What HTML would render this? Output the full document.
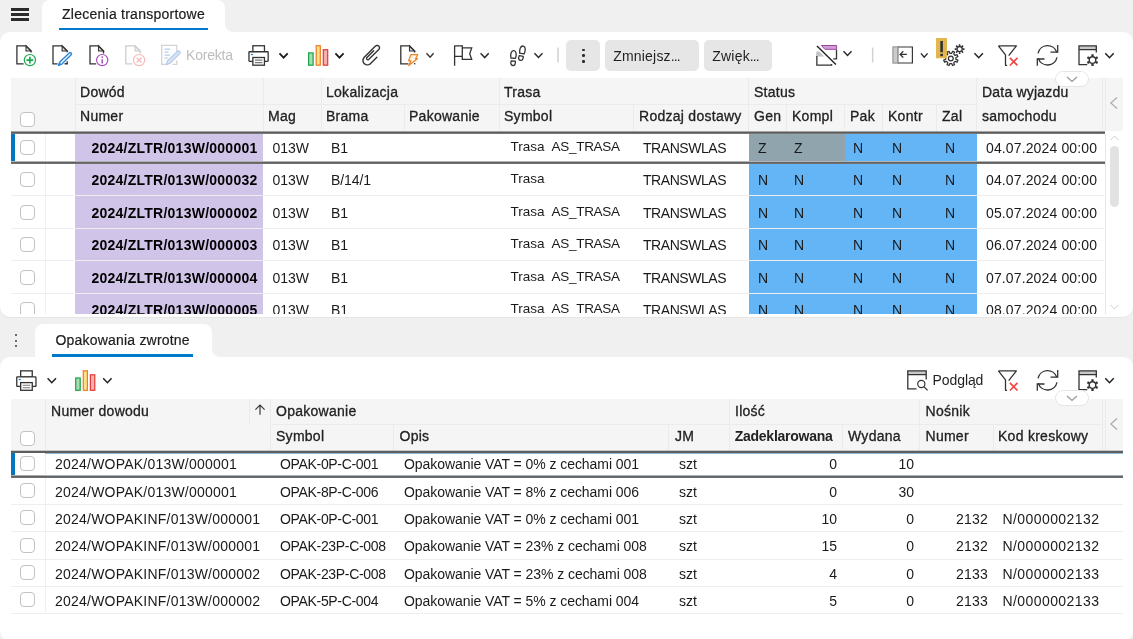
<!DOCTYPE html>
<html><head><meta charset="utf-8"><title>Zlecenia transportowe</title>
<style>
*{box-sizing:border-box;margin:0;padding:0}
html,body{width:1133px;height:639px;overflow:hidden;background:#f0f0f0;font-family:"Liberation Sans",sans-serif;font-size:14px;color:#212121}
.a{position:absolute}
.panel{position:absolute;left:0;width:1133px;background:#fff;border-radius:10px}
.tab{position:absolute;background:#fff;border-radius:8px 8px 0 0}
.lbl{position:absolute;white-space:pre;color:#1c1c1c;line-height:16px;-webkit-text-stroke:0.2px #1c1c1c}
.ul{position:absolute;height:2.8px;background:#007acc}
.hd{position:absolute;background:#f5f5f5}
.hc{position:absolute;white-space:pre;font-size:14px;color:#222;line-height:16px;-webkit-text-stroke:0.3px #222;letter-spacing:0.27px}
.hb{position:absolute;white-space:pre;font-size:14px;color:#222;line-height:16px;font-weight:700}
.vs{position:absolute;width:1px;background:#ebebeb}
.hs{position:absolute;height:1px;background:#ebebeb}
.c{position:absolute;white-space:pre;line-height:16px;color:#1a1a1a}
.b{font-weight:700;color:#000}
.cb{position:absolute;width:15px;height:15px;border:1px solid #c2c2c2;border-radius:4px;background:#fff}
.bg{position:absolute}
svg{position:absolute;overflow:visible}
</style></head><body>
<div id="root" style="position:absolute;left:0;top:0;width:1133px;height:639px;overflow:hidden;transform:translateZ(0);will-change:transform">
<div class="a" style="left:11px;top:8px;width:18px;height:2.6px;background:#2b2b2b"></div>
<div class="a" style="left:11px;top:13px;width:18px;height:2.6px;background:#2b2b2b"></div>
<div class="a" style="left:11px;top:18px;width:18px;height:2.6px;background:#2b2b2b"></div>
<div class="tab" style="left:42px;top:0;width:183.2px;height:34px"></div>
<div class="a" style="left:225.2px;top:23.7px;width:8px;height:8px;background:radial-gradient(circle at 100% 0,rgba(255,255,255,0) 7.6px,#fff 8.2px)"></div>
<div class="lbl" style="left:62px;top:6px;letter-spacing:0.25px">Zlecenia transportowe</div>
<div class="ul" style="left:59px;top:27.7px;width:149.2px"></div>
<div class="panel" style="top:31.7px;height:285.3px;box-shadow:0 1px 0 #e6e6e6"></div>
<div class="tab" style="left:35px;top:324px;width:176.5px;height:35px"></div>
<div class="a" style="left:211.5px;top:349px;width:8px;height:8px;background:radial-gradient(circle at 100% 0,rgba(255,255,255,0) 7.6px,#fff 8.2px)"></div>
<div class="lbl" style="left:55.5px;top:332px;letter-spacing:0.2px">Opakowania zwrotne</div>
<div class="ul" style="left:52px;top:354.2px;width:140.8px"></div>
<div class="a" style="left:15.1px;top:334.3px;width:2px;height:2px;border-radius:1px;background:#3c3c3c"></div>
<div class="a" style="left:15.1px;top:339.55px;width:2px;height:2px;border-radius:1px;background:#3c3c3c"></div>
<div class="a" style="left:15.1px;top:344.7px;width:2px;height:2px;border-radius:1px;background:#3c3c3c"></div>
<div class="panel" style="top:357px;height:284px"></div>
<svg style="left:0;top:0" width="1133" height="80" viewBox="0 0 1133 80"><path d="M26.0 45.9 V51.0 H31.1 Z" fill="#dcdcdc" stroke="#333" stroke-width="1.1" stroke-linejoin="miter"/><path d="M23.6 63.8 H16.9 V45.9 H26.0 L31.1 51.0 V52.6" fill="none" stroke="#333" stroke-width="1.3"/><circle cx="29.9" cy="60.1" r="5.6" fill="#fff" stroke="#17a84b" stroke-width="1.2"/><path d="M26.5 60.1 H33.3 M29.9 56.7 V63.5" stroke="#17a84b" stroke-width="1.7"/><path d="M62.1 45.9 V51.0 H67.2 Z" fill="#dcdcdc" stroke="#333" stroke-width="1.1" stroke-linejoin="miter"/><path d="M57.6 63.8 H53.0 V45.9 H62.1 L67.2 51.0 V52.2" fill="none" stroke="#333" stroke-width="1.3"/><path d="M64.6 63.75 H67.25 V61.2" fill="none" stroke="#333" stroke-width="1.3"/><path d="M58.5 65.4 L59.8 62 L69.3 52.9 A1.35 1.35 0 0 1 71.2 54.8 L61.9 64.1 Z" fill="#fff" stroke="#2b85d8" stroke-width="1.45" stroke-linejoin="round"/><path d="M58.2 65.7 L59.5 62.3 L61.6 64.4 Z" fill="#2b85d8"/><path d="M98.5 45.9 V51.0 H103.5 Z" fill="#dcdcdc" stroke="#333" stroke-width="1.1" stroke-linejoin="miter"/><path d="M96.2 63.8 H90.0 V45.9 H98.5 L103.5 51.0 V53.4" fill="none" stroke="#333" stroke-width="1.3"/><circle cx="102.2" cy="60.1" r="5.6" fill="#fff" stroke="#a64dbd" stroke-width="1.2"/><path d="M102.2 59.2 V63.4" stroke="#a64dbd" stroke-width="1.5"/><circle cx="102.2" cy="57.1" r="0.9" fill="#a64dbd"/><path d="M135.0 45.9 V51.0 H140.1 Z" fill="#f0f0f0" stroke="#cdcdcd" stroke-width="1.1" stroke-linejoin="miter"/><path d="M132.4 63.8 H125.8 V45.9 H135.0 L140.1 51.0 V53.4" fill="none" stroke="#cdcdcd" stroke-width="1.3"/><circle cx="139.1" cy="60.1" r="5.6" fill="#fff" stroke="#f7b9b9" stroke-width="1.2"/><path d="M136.7 57.7 L141.5 62.5 M141.5 57.7 L136.7 62.5" stroke="#f7b9b9" stroke-width="1.3"/><path d="M166.4 64.3 H161.7 V45.4 H176.8 V53.5 M176.8 60.5 V64.3 H172.5" fill="none" stroke="#d4d4d4" stroke-width="1.3"/><path d="M164.6 49.2 H170 M164.6 52.2 H168.6 M164.6 55.2 H170 M164.6 58.2 H167.6" stroke="#b3cdee" stroke-width="1.2"/><path d="M166.3 64.6 L167.6 60.6 L177.4 51.4 A1.5 1.5 0 0 1 179.7 53.7 L170.2 63.2 Z" fill="#d6e3f4" stroke="#b3cbea" stroke-width="1.2" stroke-linejoin="round"/><rect x="252.85" y="45.75" width="11.6" height="6" fill="#fff" stroke="#333" stroke-width="1.3"/><rect x="248.95" y="51.75" width="19.2" height="9.6" rx="0.5" fill="#fff" stroke="#333" stroke-width="1.3"/><rect x="252.85" y="57.50" width="11.6" height="7.7" fill="#fff" stroke="#333" stroke-width="1.3"/><path d="M254.9 60.1 H262.4 M254.9 62.6 H262.4" stroke="#777" stroke-width="1.1"/><ellipse cx="252.0" cy="54.5" rx="1.3" ry="0.75" fill="#1e88e5"/><path d="M279.5 53.4 L283.6 57.7 L287.7 53.4" fill="none" stroke="#1a1a1a" stroke-width="1.75"/><rect x="308.6" y="52.9" width="4.5" height="12.3" fill="#a9dbb0" stroke="#16a34a" stroke-width="1.2"/><rect x="316.2" y="45.7" width="4.1" height="19.5" fill="#ffe08a" stroke="#ef7d22" stroke-width="1.2"/><rect x="323.3" y="49.7" width="4.4" height="15.5" fill="#f6b0b0" stroke="#e53935" stroke-width="1.2"/><path d="M335.4 53.4 L339.5 57.7 L343.6 53.4" fill="none" stroke="#1a1a1a" stroke-width="1.75"/><path d="M373.64 50.77 L366.99 57.42 L366.99 57.42 L366.80 57.65 L366.67 57.93 L366.60 58.22 L366.60 58.52 L366.67 58.82 L366.80 59.09 L366.99 59.33 L367.23 59.52 L367.50 59.65 L367.79 59.71 L368.10 59.71 L368.39 59.65 L368.66 59.52 L368.90 59.33 L378.80 49.43 L378.80 49.43 L379.13 49.02 L379.36 48.54 L379.47 48.03 L379.47 47.50 L379.36 46.99 L379.13 46.51 L378.80 46.10 L378.39 45.78 L377.91 45.55 L377.40 45.43 L376.87 45.43 L376.36 45.55 L375.89 45.78 L375.48 46.10 L364.27 57.31 L364.27 57.31 L363.65 58.09 L363.21 58.99 L362.99 59.96 L362.99 60.96 L363.21 61.93 L363.65 62.83 L364.27 63.60 L365.05 64.23 L365.94 64.66 L366.92 64.88 L367.91 64.88 L368.88 64.66 L369.78 64.23 L370.56 63.60 L376.89 57.28" fill="none" stroke="#333" stroke-width="1.4" stroke-linecap="round" stroke-linejoin="round"/><path d="M409.5 45.9 V51.0 H414.6 Z" fill="#dcdcdc" stroke="#333" stroke-width="1.1" stroke-linejoin="miter"/><path d="M408.4 63.8 H400.8 V45.9 H409.5 L414.6 51.0 V52.4" fill="none" stroke="#333" stroke-width="1.3"/><path d="M414.3 63.75 H414.65 V63" fill="none" stroke="#333" stroke-width="1.3"/><path d="M410.9 54.7 H417.7 L415.5 58.7 H417.4 L408.7 65.5 L411 60.8 H408.6 Z" fill="#fff6ec" stroke="#ee8426" stroke-width="1.25" stroke-linejoin="round"/><path d="M426.5 53.3 L430.1 57.3 L433.6 53.3" fill="none" stroke="#333" stroke-width="1.35"/><path d="M454.6 45.4 V65.8 M454.6 45.9 H462.3 V56.4 H454.6 M462.3 47.9 H471.7 L469.7 53.7 L471.7 59.4 H462.3 V56.4" fill="none" stroke="#333" stroke-width="1.3"/><path d="M480.6 53.3 L484.7 57.6 L488.7 53.3" fill="none" stroke="#2a2a2a" stroke-width="1.45"/><path d="M-2.3 3.8 C-3.3 0.2 -2.6 -3.8 0 -3.8 C2.6 -3.8 3.3 0.2 2.3 3.8 Z" transform="translate(513.5 54.4) rotate(5)" fill="none" stroke="#333" stroke-width="1.3" stroke-linejoin="round"/><path d="M-2.1 -2.2 H2.1 C2.7 1 1.7 2.3 0 2.3 C-1.7 2.3 -2.7 1 -2.1 -2.2 Z" transform="translate(513.05 63.2) rotate(5)" fill="none" stroke="#333" stroke-width="1.3" stroke-linejoin="round"/><path d="M-2.3 3.8 C-3.3 0.2 -2.6 -3.8 0 -3.8 C2.6 -3.8 3.3 0.2 2.3 3.8 Z" transform="translate(522.55 49.8) rotate(10)" fill="none" stroke="#333" stroke-width="1.3" stroke-linejoin="round"/><path d="M-2.1 -2.2 H2.1 C2.7 1 1.7 2.3 0 2.3 C-1.7 2.3 -2.7 1 -2.1 -2.2 Z" transform="translate(520.85 58.15) rotate(10)" fill="none" stroke="#333" stroke-width="1.3" stroke-linejoin="round"/><path d="M534.5 53.3 L538.5 57.5 L542.5 53.3" fill="none" stroke="#2a2a2a" stroke-width="1.45"/><rect x="557.3" y="47.5" width="1.5" height="15" fill="#d2d2d2"/><path d="M821.3 45.5 H836.6 V49.3 H824.9 Z" fill="#cda0d3" stroke="#a043a6" stroke-width="1"/><path d="M816.2 51.4 H819.4 L824.2 56.5 H816.2 Z" fill="#c4c4c4"/><path d="M836.5 49.8 V58.9 H833.2 M816.85 56 V65.2 H831.6 V63.9" fill="none" stroke="#333" stroke-width="1.3"/><path d="M817 46 L835.9 64.6" stroke="#222" stroke-width="1.4"/><path d="M843.5 51.3 L847.5 55.5 L851.5 51.3" fill="none" stroke="#2a2a2a" stroke-width="1.45"/><rect x="871.9" y="47.5" width="1.5" height="15" fill="#d2d2d2"/><rect x="892.9" y="46.9" width="5" height="16.2" fill="#cbcbcb" stroke="#8c8c8c" stroke-width="1"/><path d="M898 47 H912.4 V63 H898" fill="none" stroke="#3a3634" stroke-width="1.2"/><path d="M898 46.4 V63.6" stroke="#8c8c8c" stroke-width="0.9"/><path d="M906.9 54.4 H900.2 M903.3 51.3 L900.1 54.4 L903.3 57.5" fill="none" stroke="#333" stroke-width="1.25"/><path d="M920.9 53.4 L924.2 57.3 L927.6 53.4" fill="none" stroke="#2a2a2a" stroke-width="1.4"/><path d="M955.92 59.33 L957.88 60.17 L957.06 62.16 L955.08 61.36 L953.76 62.68 L954.56 64.66 L952.57 65.48 L951.73 63.52 L949.87 63.52 L949.03 65.48 L947.04 64.66 L947.84 62.68 L946.52 61.36 L944.54 62.16 L943.72 60.17 L945.68 59.33 L945.68 57.47 L943.72 56.63 L944.54 54.64 L946.52 55.44 L947.84 54.12 L947.04 52.14 L949.03 51.32 L949.87 53.28 L951.73 53.28 L952.57 51.32 L954.56 52.14 L953.76 54.12 L955.08 55.44 L957.06 54.64 L957.88 56.63 L955.92 57.47 Z" fill="#fff" stroke="#333" stroke-width="1.25" stroke-linejoin="round"/><circle cx="950.8" cy="58.4" r="2.4" fill="#fff" stroke="#333" stroke-width="1.25"/><circle cx="959.6" cy="49.1" r="2.6" fill="#fff" stroke="#333" stroke-width="1.3"/><path d="M962.70 49.10 L964.50 49.10 M961.79 51.29 L963.06 52.56 M959.60 52.20 L959.60 54.00 M957.41 51.29 L956.14 52.56 M956.50 49.10 L954.70 49.10 M957.41 46.91 L956.14 45.64 M959.60 46.00 L959.60 44.20 M961.79 46.91 L963.06 45.64 " stroke="#333" stroke-width="1.6" fill="none"/><rect x="936" y="38" width="11" height="20.3" fill="#e3b650"/><rect x="940.3" y="41" width="2.6" height="11.2" fill="#333"/><rect x="940.3" y="53.8" width="2.6" height="2.4" fill="#333"/><path d="M974.5 53.3 L978.7 57.7 L982.9 53.3" fill="none" stroke="#222" stroke-width="1.5"/><path d="M998.4 45.9 H1016.4 L1008.7 55.7 M998.4 45.9 L1005.5 54.9 V65.3 H1007.1" fill="none" stroke="#333" stroke-width="1.3" stroke-linejoin="round"/><path d="M1009.9 57.9 L1017.5 65.5 M1017.5 57.9 L1009.9 65.5" stroke="#f04545" stroke-width="1.7"/><path d="M1038.01 53.28 A9.7 9.7 0 0 1 1056.73 52.30" fill="none" stroke="#333" stroke-width="1.3"/><path d="M1057.7 44.9 V52.2 H1050.5" fill="none" stroke="#333" stroke-width="1.3"/><path d="M1056.99 57.32 A9.7 9.7 0 0 1 1038.27 58.30" fill="none" stroke="#333" stroke-width="1.3"/><path d="M1037.3 65.8 V59.0 H1044.5" fill="none" stroke="#333" stroke-width="1.3"/><rect x="1079.0" y="45.9" width="17.3" height="3.4" fill="#c9c9c9"/><path d="M1087.4 64.7 H1079.0 V45.9 H1096.3 V52.5 M1079.0 49.6 H1096.3" fill="none" stroke="#333" stroke-width="1.3"/><circle cx="1092.5" cy="60.1" r="6.6" fill="#fff"/><circle cx="1092.5" cy="60.1" r="3.3" fill="#fff" stroke="#333" stroke-width="1.4"/><path d="M1095.88 62.05 L1097.61 63.05 M1092.50 64.00 L1092.50 66.00 M1089.12 62.05 L1087.39 63.05 M1089.12 58.15 L1087.39 57.15 M1092.50 56.20 L1092.50 54.20 M1095.88 58.15 L1097.61 57.15 " stroke="#333" stroke-width="2.3" fill="none"/><path d="M1105.3 53.3 L1109.5 57.7 L1113.7 53.3" fill="none" stroke="#222" stroke-width="1.5"/></svg>
<div class="a" style="left:186px;top:47.4px;line-height:16px;color:#bdbdbd;letter-spacing:-0.2px;white-space:pre">Korekta</div>
<div class="a" style="left:566px;top:40px;width:34px;height:31px;border-radius:5px;background:#e6e6e6"></div>
<div class="a" style="left:582.3px;top:48.6px;width:2.5px;height:2.5px;border-radius:1.3px;background:#2a2a2a"></div>
<div class="a" style="left:582.3px;top:54.4px;width:2.5px;height:2.5px;border-radius:1.3px;background:#2a2a2a"></div>
<div class="a" style="left:582.3px;top:60.2px;width:2.5px;height:2.5px;border-radius:1.3px;background:#2a2a2a"></div>
<div class="a" style="left:605px;top:40px;width:94px;height:31px;border-radius:5px;background:#e6e6e6"></div>
<div class="a" style="left:613.2px;top:47.5px;line-height:16px;color:#1f1f1f;white-space:pre;letter-spacing:0.2px">Zmniejsz<span style="letter-spacing:-0.9px">...</span></div>
<div class="a" style="left:704px;top:40px;width:68px;height:31px;border-radius:5px;background:#e6e6e6"></div>
<div class="a" style="left:712.3px;top:47.5px;line-height:16px;color:#1f1f1f;white-space:pre;letter-spacing:0.2px">Zwięk<span style="letter-spacing:-0.9px">...</span></div>

<svg style="left:0;top:325px" width="1133" height="80" viewBox="0 0 1133 80"><rect x="20.65" y="45.85" width="11.6" height="6" fill="#fff" stroke="#333" stroke-width="1.3"/><rect x="16.75" y="51.85" width="19.2" height="9.6" rx="0.5" fill="#fff" stroke="#333" stroke-width="1.3"/><rect x="20.65" y="57.60" width="11.6" height="7.7" fill="#fff" stroke="#333" stroke-width="1.3"/><path d="M22.7 60.2 H30.2 M22.7 62.7 H30.2" stroke="#777" stroke-width="1.1"/><ellipse cx="19.8" cy="54.6" rx="1.3" ry="0.75" fill="#1e88e5"/><path d="M47.6 53.3 L51.8 57.7 L56.0 53.3" fill="none" stroke="#222" stroke-width="1.5"/><rect x="75.7" y="53.0" width="4.5" height="12.3" fill="#a9dbb0" stroke="#16a34a" stroke-width="1.2"/><rect x="83.3" y="45.8" width="4.1" height="19.5" fill="#ffe08a" stroke="#ef7d22" stroke-width="1.2"/><rect x="90.4" y="49.8" width="4.4" height="15.5" fill="#f6b0b0" stroke="#e53935" stroke-width="1.2"/><path d="M103.2 53.3 L107.4 57.7 L111.6 53.3" fill="none" stroke="#222" stroke-width="1.5"/><rect x="907.8" y="45.9" width="18.4" height="3.4" fill="#c9c9c9"/><path d="M916.5 63.8 H907.8 V45.9 H926.2 V54.6 M907.8 49.6 H926.2" fill="none" stroke="#333" stroke-width="1.3"/><circle cx="921.3" cy="59" r="3.6" fill="#fff" stroke="#333" stroke-width="1.2"/><path d="M923.9 61.6 L927.6 65.4" stroke="#333" stroke-width="1.3"/><path d="M998.4 45.9 H1016.4 L1008.7 55.7 M998.4 45.9 L1005.5 54.9 V65.3 H1007.1" fill="none" stroke="#333" stroke-width="1.3" stroke-linejoin="round"/><path d="M1009.9 57.9 L1017.5 65.5 M1017.5 57.9 L1009.9 65.5" stroke="#f04545" stroke-width="1.7"/><path d="M1038.01 53.28 A9.7 9.7 0 0 1 1056.73 52.30" fill="none" stroke="#333" stroke-width="1.3"/><path d="M1057.7 44.9 V52.2 H1050.5" fill="none" stroke="#333" stroke-width="1.3"/><path d="M1056.99 57.32 A9.7 9.7 0 0 1 1038.27 58.30" fill="none" stroke="#333" stroke-width="1.3"/><path d="M1037.3 65.8 V59.0 H1044.5" fill="none" stroke="#333" stroke-width="1.3"/><rect x="1079.0" y="45.9" width="17.3" height="3.4" fill="#c9c9c9"/><path d="M1087.4 64.7 H1079.0 V45.9 H1096.3 V52.5 M1079.0 49.6 H1096.3" fill="none" stroke="#333" stroke-width="1.3"/><circle cx="1092.5" cy="60.1" r="6.6" fill="#fff"/><circle cx="1092.5" cy="60.1" r="3.3" fill="#fff" stroke="#333" stroke-width="1.4"/><path d="M1095.88 62.05 L1097.61 63.05 M1092.50 64.00 L1092.50 66.00 M1089.12 62.05 L1087.39 63.05 M1089.12 58.15 L1087.39 57.15 M1092.50 56.20 L1092.50 54.20 M1095.88 58.15 L1097.61 57.15 " stroke="#333" stroke-width="2.3" fill="none"/><path d="M1105.3 53.3 L1109.5 57.7 L1113.7 53.3" fill="none" stroke="#222" stroke-width="1.5"/></svg>
<div class="a" style="left:932.5px;top:372px;line-height:16px;color:#1f1f1f;white-space:pre;letter-spacing:-0.08px">Podgląd</div>

<div class="a" id="g1" style="left:0;top:0;width:1133px;height:314px;overflow:hidden">
<div class="hd" style="left:11px;top:78px;width:1112px;height:53px"></div>
<div class="vs" style="left:75px;top:78px;height:53px"></div>
<div class="vs" style="left:263px;top:78px;height:53px"></div>
<div class="vs" style="left:321px;top:78px;height:53px"></div>
<div class="vs" style="left:499px;top:78px;height:53px"></div>
<div class="vs" style="left:748px;top:78px;height:53px"></div>
<div class="vs" style="left:976px;top:78px;height:53px"></div>
<div class="vs" style="left:1102px;top:78px;height:53px"></div>
<div class="vs" style="left:1105px;top:78px;height:53px"></div>
<div class="vs" style="left:404px;top:104px;height:27px"></div>
<div class="vs" style="left:633px;top:104px;height:27px"></div>
<div class="vs" style="left:786px;top:104px;height:27px"></div>
<div class="vs" style="left:844px;top:104px;height:27px"></div>
<div class="vs" style="left:882px;top:104px;height:27px"></div>
<div class="vs" style="left:936px;top:104px;height:27px"></div>
<div class="hs" style="left:75px;top:104px;width:901px"></div>
<div class="hc" style="left:80px;top:84px;">Dowód</div>
<div class="hc" style="left:326px;top:84px;">Lokalizacja</div>
<div class="hc" style="left:504px;top:84px;">Trasa</div>
<div class="hc" style="left:754px;top:84px;">Status</div>
<div class="hc" style="left:982px;top:84px;letter-spacing:0.2px">Data wyjazdu</div>
<div class="hc" style="left:80px;top:108px">Numer</div>
<div class="hc" style="left:268px;top:108px">Mag</div>
<div class="hc" style="left:326px;top:108px">Brama</div>
<div class="hc" style="left:409px;top:108px">Pakowanie</div>
<div class="hc" style="left:504px;top:108px">Symbol</div>
<div class="hc" style="left:639px;top:108px">Rodzaj dostawy</div>
<div class="hc" style="left:754px;top:108px">Gen</div>
<div class="hc" style="left:792px;top:108px">Kompl</div>
<div class="hc" style="left:850px;top:108px">Pak</div>
<div class="hc" style="left:888px;top:108px">Kontr</div>
<div class="hc" style="left:942px;top:108px">Zal</div>
<div class="hc" style="left:982px;top:108px">samochodu</div>
<div class="cb" style="left:20px;top:112px"></div>
<div class="bg" style="left:75px;top:131.0px;width:188px;height:32.5px;background:#d1c4e9"></div>
<div class="bg" style="left:749px;top:131.0px;width:96px;height:32.5px;background:#90a4ae"></div>
<div class="bg" style="left:845px;top:131.0px;width:132px;height:32.5px;background:#64b5f6"></div>
<div class="hs" style="left:11px;top:162px;width:1093px;background:#eeeeee"></div>
<div class="cb" style="left:20px;top:139.5px"></div>
<div class="c b" style="right:875.5px;top:140.2px;letter-spacing:0.25px">2024/ZLTR/013W/000001</div>
<div class="c" style="left:272.5px;top:140.2px">013W</div>
<div class="c" style="left:331px;top:140.2px;letter-spacing:-0.1px">B1</div>
<div class="c" style="left:510.5px;top:139.29999999999998px;font-size:13.5px;letter-spacing:0px">Trasa</div>
<div class="c" style="left:551.6px;top:139.29999999999998px;font-size:13.5px;letter-spacing:-0.3px">AS_TRASA</div>
<div class="c" style="left:643px;top:140.2px;letter-spacing:-0.45px">TRANSWLAS</div>
<div class="c" style="left:758px;top:140.2px">Z</div>
<div class="c" style="left:794px;top:140.2px">Z</div>
<div class="c" style="left:853px;top:140.2px">N</div>
<div class="c" style="left:892px;top:140.2px">N</div>
<div class="c" style="left:945px;top:140.2px">N</div>
<div class="c" style="left:986px;top:140.2px;letter-spacing:0.13px">04.07.2024 00:00</div>
<div class="bg" style="left:75px;top:163.5px;width:188px;height:32.5px;background:#d1c4e9"></div>
<div class="bg" style="left:749px;top:163.5px;width:228px;height:32.5px;background:#64b5f6"></div>
<div class="hs" style="left:11px;top:195px;width:1093px;background:#eeeeee"></div>
<div class="cb" style="left:20px;top:172.0px"></div>
<div class="c b" style="right:875.5px;top:172.2px;letter-spacing:0.25px">2024/ZLTR/013W/000032</div>
<div class="c" style="left:272.5px;top:172.2px">013W</div>
<div class="c" style="left:331px;top:172.2px;letter-spacing:-0.1px">B/14/1</div>
<div class="c" style="left:510.5px;top:171.29999999999998px;font-size:13.5px;letter-spacing:0px">Trasa</div>
<div class="c" style="left:643px;top:172.2px;letter-spacing:-0.45px">TRANSWLAS</div>
<div class="c" style="left:758px;top:172.2px">N</div>
<div class="c" style="left:794px;top:172.2px">N</div>
<div class="c" style="left:853px;top:172.2px">N</div>
<div class="c" style="left:892px;top:172.2px">N</div>
<div class="c" style="left:945px;top:172.2px">N</div>
<div class="c" style="left:986px;top:172.2px;letter-spacing:0.13px">04.07.2024 00:00</div>
<div class="bg" style="left:75px;top:196.0px;width:188px;height:32.5px;background:#d1c4e9"></div>
<div class="bg" style="left:749px;top:196.0px;width:228px;height:32.5px;background:#64b5f6"></div>
<div class="hs" style="left:11px;top:228px;width:1093px;background:#eeeeee"></div>
<div class="cb" style="left:20px;top:204.5px"></div>
<div class="c b" style="right:875.5px;top:205.2px;letter-spacing:0.25px">2024/ZLTR/013W/000002</div>
<div class="c" style="left:272.5px;top:205.2px">013W</div>
<div class="c" style="left:331px;top:205.2px;letter-spacing:-0.1px">B1</div>
<div class="c" style="left:510.5px;top:204.29999999999998px;font-size:13.5px;letter-spacing:0px">Trasa</div>
<div class="c" style="left:551.6px;top:204.29999999999998px;font-size:13.5px;letter-spacing:-0.3px">AS_TRASA</div>
<div class="c" style="left:643px;top:205.2px;letter-spacing:-0.45px">TRANSWLAS</div>
<div class="c" style="left:758px;top:205.2px">N</div>
<div class="c" style="left:794px;top:205.2px">N</div>
<div class="c" style="left:853px;top:205.2px">N</div>
<div class="c" style="left:892px;top:205.2px">N</div>
<div class="c" style="left:945px;top:205.2px">N</div>
<div class="c" style="left:986px;top:205.2px;letter-spacing:0.13px">05.07.2024 00:00</div>
<div class="bg" style="left:75px;top:228.5px;width:188px;height:32.5px;background:#d1c4e9"></div>
<div class="bg" style="left:749px;top:228.5px;width:228px;height:32.5px;background:#64b5f6"></div>
<div class="hs" style="left:11px;top:260px;width:1093px;background:#eeeeee"></div>
<div class="cb" style="left:20px;top:237.0px"></div>
<div class="c b" style="right:875.5px;top:237.2px;letter-spacing:0.25px">2024/ZLTR/013W/000003</div>
<div class="c" style="left:272.5px;top:237.2px">013W</div>
<div class="c" style="left:331px;top:237.2px;letter-spacing:-0.1px">B1</div>
<div class="c" style="left:510.5px;top:236.29999999999998px;font-size:13.5px;letter-spacing:0px">Trasa</div>
<div class="c" style="left:551.6px;top:236.29999999999998px;font-size:13.5px;letter-spacing:-0.3px">AS_TRASA</div>
<div class="c" style="left:643px;top:237.2px;letter-spacing:-0.45px">TRANSWLAS</div>
<div class="c" style="left:758px;top:237.2px">N</div>
<div class="c" style="left:794px;top:237.2px">N</div>
<div class="c" style="left:853px;top:237.2px">N</div>
<div class="c" style="left:892px;top:237.2px">N</div>
<div class="c" style="left:945px;top:237.2px">N</div>
<div class="c" style="left:986px;top:237.2px;letter-spacing:0.13px">06.07.2024 00:00</div>
<div class="bg" style="left:75px;top:261.0px;width:188px;height:32.5px;background:#d1c4e9"></div>
<div class="bg" style="left:749px;top:261.0px;width:228px;height:32.5px;background:#64b5f6"></div>
<div class="hs" style="left:11px;top:293px;width:1093px;background:#eeeeee"></div>
<div class="cb" style="left:20px;top:269.5px"></div>
<div class="c b" style="right:875.5px;top:270.2px;letter-spacing:0.25px">2024/ZLTR/013W/000004</div>
<div class="c" style="left:272.5px;top:270.2px">013W</div>
<div class="c" style="left:331px;top:270.2px;letter-spacing:-0.1px">B1</div>
<div class="c" style="left:510.5px;top:269.3px;font-size:13.5px;letter-spacing:0px">Trasa</div>
<div class="c" style="left:551.6px;top:269.3px;font-size:13.5px;letter-spacing:-0.3px">AS_TRASA</div>
<div class="c" style="left:643px;top:270.2px;letter-spacing:-0.45px">TRANSWLAS</div>
<div class="c" style="left:758px;top:270.2px">N</div>
<div class="c" style="left:794px;top:270.2px">N</div>
<div class="c" style="left:853px;top:270.2px">N</div>
<div class="c" style="left:892px;top:270.2px">N</div>
<div class="c" style="left:945px;top:270.2px">N</div>
<div class="c" style="left:986px;top:270.2px;letter-spacing:0.13px">07.07.2024 00:00</div>
<div class="bg" style="left:75px;top:293.5px;width:188px;height:32.5px;background:#d1c4e9"></div>
<div class="bg" style="left:749px;top:293.5px;width:228px;height:32.5px;background:#64b5f6"></div>
<div class="hs" style="left:11px;top:326px;width:1093px;background:#eeeeee"></div>
<div class="cb" style="left:20px;top:302.0px"></div>
<div class="c b" style="right:875.5px;top:302.2px;letter-spacing:0.25px">2024/ZLTR/013W/000005</div>
<div class="c" style="left:272.5px;top:302.2px">013W</div>
<div class="c" style="left:331px;top:302.2px;letter-spacing:-0.1px">B1</div>
<div class="c" style="left:510.5px;top:301.3px;font-size:13.5px;letter-spacing:0px">Trasa</div>
<div class="c" style="left:551.6px;top:301.3px;font-size:13.5px;letter-spacing:-0.3px">AS_TRASA</div>
<div class="c" style="left:643px;top:302.2px;letter-spacing:-0.45px">TRANSWLAS</div>
<div class="c" style="left:758px;top:302.2px">N</div>
<div class="c" style="left:794px;top:302.2px">N</div>
<div class="c" style="left:853px;top:302.2px">N</div>
<div class="c" style="left:892px;top:302.2px">N</div>
<div class="c" style="left:945px;top:302.2px">N</div>
<div class="c" style="left:986px;top:302.2px;letter-spacing:0.13px">08.07.2024 00:00</div>
<div class="vs" style="left:45px;top:131px;height:190px;background:#f0f0f0"></div>
<div class="vs" style="left:1105px;top:134px;height:190px;background:#e6e6e6"></div>
<div class="a" style="left:11px;top:131px;width:1093.5px;height:3px;background:linear-gradient(#a4a4a4 0 1px,#5c5c5c 1px 2px,#787878 2px 3px)"></div>
<div class="a" style="left:11px;top:161px;width:1093.5px;height:3px;background:linear-gradient(#b4b4b4 0 1px,#626262 1px 2px,#727272 2px 3px)"></div>
<div class="a" style="left:11px;top:134px;width:4px;height:27px;background:#0277bd"></div>
</div>
<svg style="left:1109px;top:96px" width="10" height="14" viewBox="0 0 10 14"><path d="M8 1.5 L1.8 7 L8 12.5" fill="none" stroke="#a8a8a8" stroke-width="1.1"/></svg>
<svg style="left:1110px;top:135px" width="9" height="6" viewBox="0 0 9 6"><path d="M0.5 5.2 L4.5 1 L8.5 5.2" fill="none" stroke="#cfcfcf" stroke-width="1"/></svg>
<svg style="left:1110px;top:304px" width="9" height="6" viewBox="0 0 9 6"><path d="M0.5 0.8 L4.5 5 L8.5 0.8" fill="none" stroke="#cfcfcf" stroke-width="1"/></svg>
<div class="a" style="left:1110px;top:146px;width:9px;height:61px;border-radius:4.5px;background:#e2e2e2"></div>
<div class="a" style="left:1055px;top:71px;width:34px;height:16px;border-radius:8px;background:#fff;border:1px solid #e6e6e6"></div>
<svg style="left:1066px;top:75.5px" width="12" height="7" viewBox="0 0 12 7"><path d="M1 1 L6 5.5 L11 1" fill="none" stroke="#9a9a9a" stroke-width="1.3"/></svg>
<div class="a" id="g2" style="left:0;top:0;width:1133px;height:639px;overflow:hidden">
<div class="hd" style="left:11px;top:399px;width:1112px;height:52px"></div>
<div class="vs" style="left:45px;top:399px;height:52px"></div>
<div class="vs" style="left:270px;top:399px;height:52px"></div>
<div class="vs" style="left:729px;top:399px;height:52px"></div>
<div class="vs" style="left:919px;top:399px;height:52px"></div>
<div class="vs" style="left:1102px;top:399px;height:52px"></div>
<div class="vs" style="left:1105px;top:399px;height:52px"></div>
<div class="vs" style="left:249px;top:399px;height:25px"></div>
<div class="vs" style="left:393px;top:425px;height:26px"></div>
<div class="vs" style="left:668px;top:425px;height:26px"></div>
<div class="vs" style="left:842px;top:425px;height:26px"></div>
<div class="vs" style="left:993px;top:425px;height:26px"></div>
<div class="hs" style="left:270px;top:424px;width:833px"></div>
<div class="hc" style="left:51px;top:403px">Numer dowodu</div>
<div class="hc" style="left:276px;top:403px">Opakowanie</div>
<div class="hc" style="left:735px;top:403px">Ilość</div>
<div class="hc" style="left:925.5px;top:403px">Nośnik</div>
<div class="hc" style="left:276px;top:428px">Symbol</div>
<div class="hc" style="left:399.5px;top:428px">Opis</div>
<div class="hc" style="left:675px;top:428px">JM</div>
<div class="hc" style="left:848px;top:428px">Wydana</div>
<div class="hc" style="left:925.5px;top:428px">Numer</div>
<div class="hc" style="left:998px;top:428px">Kod kreskowy</div>
<div class="hb" style="left:734.7px;top:428px;letter-spacing:-0.25px">Zadeklarowana</div>
<div class="cb" style="left:20px;top:431px"></div>
<svg style="left:253.7px;top:404px" width="12" height="12" viewBox="0 0 12 12"><path d="M6 10.8 V1 M1.4 5.6 L6 1 L10.6 5.6" fill="none" stroke="#3a3a3a" stroke-width="1.2"/></svg>
<div class="hs" style="left:11px;top:476.5px;width:1112px;background:#eeeeee"></div>
<div class="cb" style="left:20px;top:455.75px"></div>
<div class="c" style="left:55px;top:456.15px;letter-spacing:0.22px">2024/WOPAK/013W/000001</div>
<div class="c" style="left:280px;top:456.15px;letter-spacing:-0.33px">OPAK-0P-C-001</div>
<div class="c" style="left:404px;top:456.15px;letter-spacing:-0.06px">Opakowanie VAT = 0% z cechami 001</div>
<div class="c" style="left:679px;top:456.15px">szt</div>
<div class="c" style="right:296px;top:456.15px">0</div>
<div class="c" style="right:219px;top:456.15px">10</div>
<div class="hs" style="left:11px;top:504px;width:1112px;background:#eeeeee"></div>
<div class="cb" style="left:20px;top:483.0px"></div>
<div class="c" style="left:55px;top:484.15px;letter-spacing:0.22px">2024/WOPAK/013W/000001</div>
<div class="c" style="left:280px;top:484.15px;letter-spacing:-0.33px">OPAK-8P-C-006</div>
<div class="c" style="left:404px;top:484.15px;letter-spacing:-0.06px">Opakowanie VAT = 8% z cechami 006</div>
<div class="c" style="left:679px;top:484.15px">szt</div>
<div class="c" style="right:296px;top:484.15px">0</div>
<div class="c" style="right:219px;top:484.15px">30</div>
<div class="hs" style="left:11px;top:531px;width:1112px;background:#eeeeee"></div>
<div class="cb" style="left:20px;top:510.25px"></div>
<div class="c" style="left:55px;top:511.15px;letter-spacing:0.22px">2024/WOPAKINF/013W/000001</div>
<div class="c" style="left:280px;top:511.15px;letter-spacing:-0.33px">OPAK-0P-C-001</div>
<div class="c" style="left:404px;top:511.15px;letter-spacing:-0.06px">Opakowanie VAT = 0% z cechami 001</div>
<div class="c" style="left:679px;top:511.15px">szt</div>
<div class="c" style="right:296px;top:511.15px">10</div>
<div class="c" style="right:219px;top:511.15px">0</div>
<div class="c" style="right:145px;top:511.15px;letter-spacing:0.2px">2132</div>
<div class="c" style="left:1002.5px;top:511.15px;letter-spacing:0.42px">N/0000002132</div>
<div class="hs" style="left:11px;top:559px;width:1112px;background:#eeeeee"></div>
<div class="cb" style="left:20px;top:537.5px"></div>
<div class="c" style="left:55px;top:538.15px;letter-spacing:0.22px">2024/WOPAKINF/013W/000001</div>
<div class="c" style="left:280px;top:538.15px;letter-spacing:-0.33px">OPAK-23P-C-008</div>
<div class="c" style="left:404px;top:538.15px;letter-spacing:-0.06px">Opakowanie VAT = 23% z cechami 008</div>
<div class="c" style="left:679px;top:538.15px">szt</div>
<div class="c" style="right:296px;top:538.15px">15</div>
<div class="c" style="right:219px;top:538.15px">0</div>
<div class="c" style="right:145px;top:538.15px;letter-spacing:0.2px">2132</div>
<div class="c" style="left:1002.5px;top:538.15px;letter-spacing:0.42px">N/0000002132</div>
<div class="hs" style="left:11px;top:586px;width:1112px;background:#eeeeee"></div>
<div class="cb" style="left:20px;top:564.75px"></div>
<div class="c" style="left:55px;top:566.15px;letter-spacing:0.22px">2024/WOPAKINF/013W/000002</div>
<div class="c" style="left:280px;top:566.15px;letter-spacing:-0.33px">OPAK-23P-C-008</div>
<div class="c" style="left:404px;top:566.15px;letter-spacing:-0.06px">Opakowanie VAT = 23% z cechami 008</div>
<div class="c" style="left:679px;top:566.15px">szt</div>
<div class="c" style="right:296px;top:566.15px">4</div>
<div class="c" style="right:219px;top:566.15px">0</div>
<div class="c" style="right:145px;top:566.15px;letter-spacing:0.2px">2133</div>
<div class="c" style="left:1002.5px;top:566.15px;letter-spacing:0.42px">N/0000002133</div>
<div class="hs" style="left:11px;top:613px;width:1112px;background:#eeeeee"></div>
<div class="cb" style="left:20px;top:592.0px"></div>
<div class="c" style="left:55px;top:593.15px;letter-spacing:0.22px">2024/WOPAKINF/013W/000002</div>
<div class="c" style="left:280px;top:593.15px;letter-spacing:-0.33px">OPAK-5P-C-004</div>
<div class="c" style="left:404px;top:593.15px;letter-spacing:-0.06px">Opakowanie VAT = 5% z cechami 004</div>
<div class="c" style="left:679px;top:593.15px">szt</div>
<div class="c" style="right:296px;top:593.15px">5</div>
<div class="c" style="right:219px;top:593.15px">0</div>
<div class="c" style="right:145px;top:593.15px;letter-spacing:0.2px">2133</div>
<div class="c" style="left:1002.5px;top:593.15px;letter-spacing:0.42px">N/0000002133</div>
<div class="vs" style="left:45px;top:451px;height:163px;background:#f0f0f0"></div>
<div class="a" style="left:11px;top:450px;width:1112px;height:3px;background:linear-gradient(#c9c9c9 0 1px,#5e5e5e 1px 2px,#5e5e5e 2px 3px)"></div>
<div class="a" style="left:11px;top:475px;width:1112px;height:3px;background:linear-gradient(#a9a9a9 0 1px,#626262 1px 2px,#6e6e6e 2px 3px)"></div>
<div class="a" style="left:11px;top:453px;width:4px;height:22px;background:#0277bd"></div>
<div class="a" style="left:45px;top:453px;width:1078px;height:1px;background:#8fbbd9"></div>
<div class="a" style="left:45px;top:475px;width:1078px;height:1px;background:#a3b5c0"></div>
</div>
<svg style="left:1109px;top:417px" width="10" height="14" viewBox="0 0 10 14"><path d="M8 1.5 L1.8 7 L8 12.5" fill="none" stroke="#a8a8a8" stroke-width="1.1"/></svg>
<div class="a" style="left:1055px;top:390px;width:34px;height:16px;border-radius:8px;background:#fff;border:1px solid #e6e6e6"></div>
<svg style="left:1066px;top:394.5px" width="12" height="7" viewBox="0 0 12 7"><path d="M1 1 L6 5.5 L11 1" fill="none" stroke="#9a9a9a" stroke-width="1.3"/></svg>
</div>
</body></html>
